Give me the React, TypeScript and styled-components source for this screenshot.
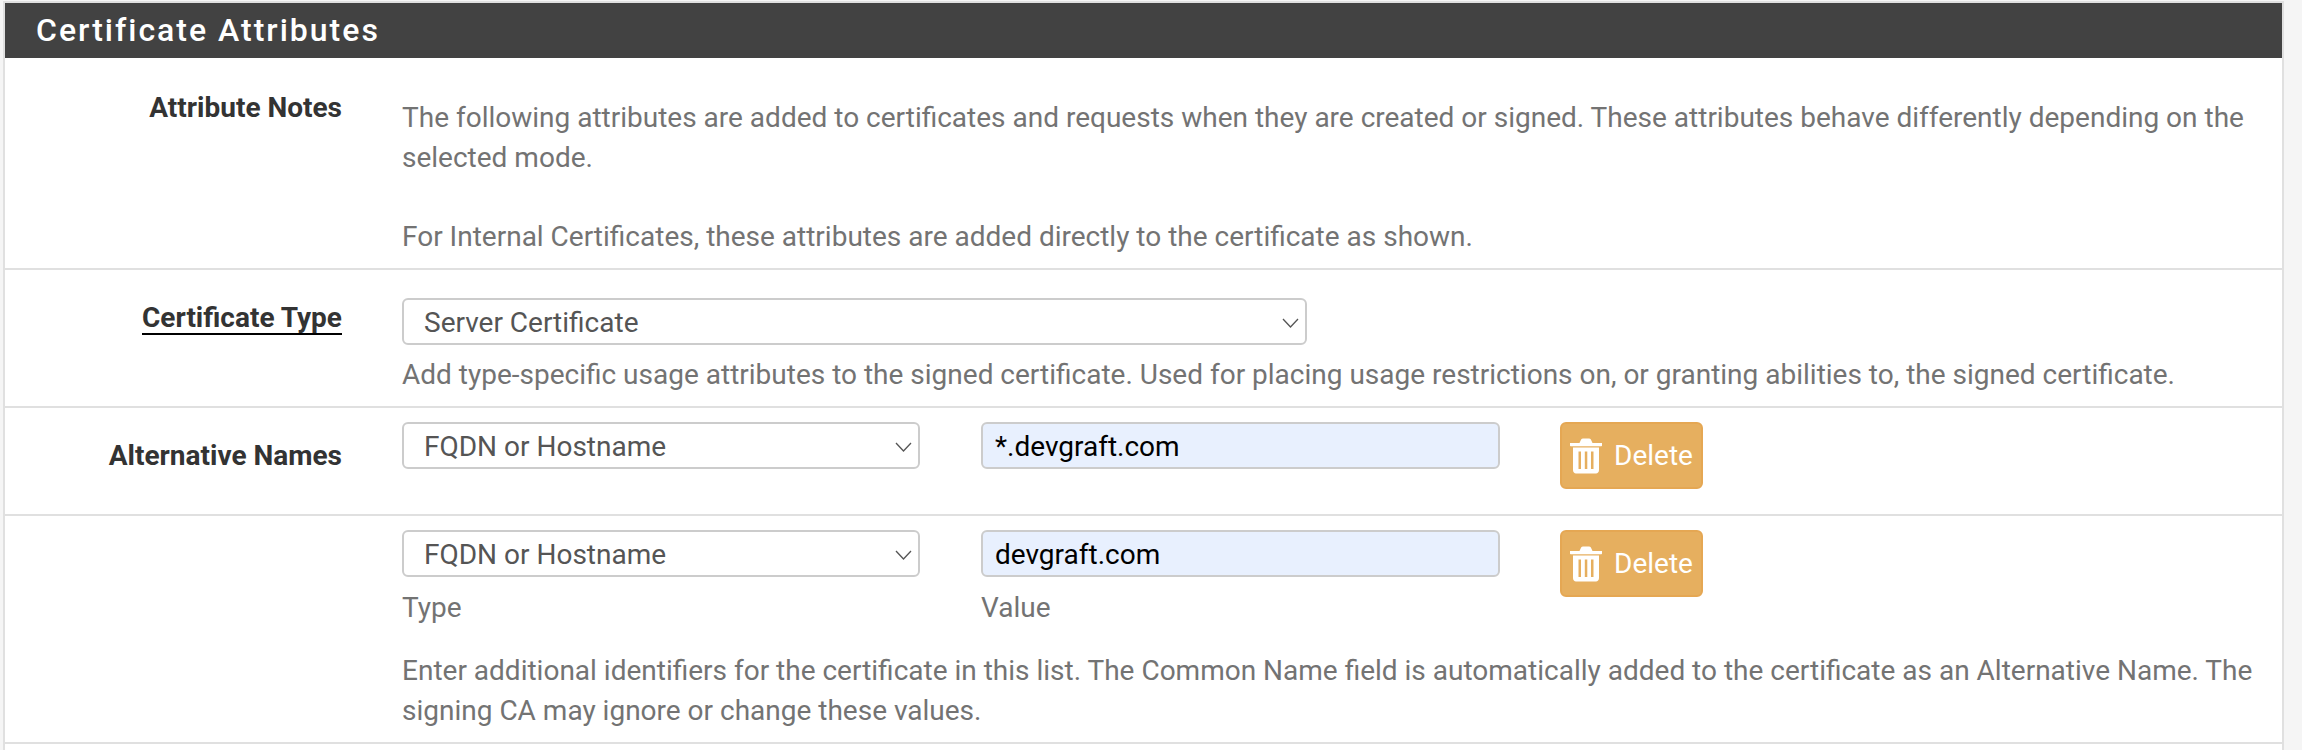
import React from "react";
import styled, { createGlobalStyle } from "styled-components";

const GlobalStyle = createGlobalStyle`
  html, body {
    margin: 0;
    padding: 0;
    background: #f5f5f5;
    font-family: Roboto, "Liberation Sans", sans-serif;
    font-size: 28px;
    color: #737373;
  }
  * { box-sizing: border-box; }
`;

const Page = styled.div`
  height: 750px;
  overflow: hidden;
  padding: 1px 18px 0 3px;
`;

const Panel = styled.section`
  height: 760px;
  background: #fff;
  border: 2px solid #e0e0e0;
`;

const PanelHeading = styled.h2`
  margin: 0;
  height: 55px;
  padding-left: 31px;
  background: #424242;
  color: #fff;
  font-size: 32px;
  font-weight: 500;
  line-height: 55px;
  letter-spacing: 2px;
`;

const Row = styled.div<{ $height: number; $border?: boolean }>`
  display: flex;
  height: ${(p) => p.$height}px;
  border-bottom: ${(p) => (p.$border === false ? "0" : "2px solid #e0e0e0")};
`;

const LabelCol = styled.div<{ $top: number }>`
  flex: 0 0 337px;
  padding-top: ${(p) => p.$top}px;
  text-align: right;
  font-weight: 700;
  color: #333;
  line-height: 30px;
`;

const Required = styled.span`
  border-bottom: 2px solid #000;
  display: inline-block;
  line-height: 30px;
`;

const ValueCol = styled.div<{ $top: number }>`
  flex: 1;
  margin-left: 60px;
  padding-top: ${(p) => p.$top}px;
  padding-right: 20px;
  min-width: 0;
`;

const Note = styled.p<{ $gap?: number }>`
  margin: ${(p) => p.$gap ?? 0}px 0 0;
  line-height: 39.5px;
`;

const SelectWrap = styled.div<{ $width: number }>`
  position: relative;
  width: ${(p) => p.$width}px;
`;

const Select = styled.select`
  display: block;
  width: 100%;
  height: 47px;
  padding: 1px 21px 0 20px;
  appearance: none;
  background: #fff;
  border: 2px solid #ccc;
  border-radius: 6px;
  color: #555;
  font: 400 28px Roboto, sans-serif;
`;

const Chevron = styled.svg`
  position: absolute;
  top: 20px;
  right: 8px;
  width: 17px;
  height: 10px;
  pointer-events: none;
`;

const Fields = styled.div`
  display: flex;
`;

const Field = styled.div`
  flex: 0 0 579px;
`;

const ValueInput = styled.input`
  display: block;
  width: 519px;
  height: 47px;
  padding: 1px 12px 0;
  background: #e8f0fe;
  border: 2px solid #ccc;
  border-radius: 6px;
  color: #000;
  font: 400 28px Roboto, sans-serif;
`;

const Caption = styled.div`
  margin-top: 11px;
  line-height: 40px;
`;

const DeleteButton = styled.button`
  display: flex;
  align-items: center;
  gap: 12px;
  width: 143px;
  height: 67px;
  padding: 0 0 0 8px;
  background: #e6af5f;
  border: 2px solid #e5a753;
  border-radius: 6px;
  color: #fff;
  font: 400 28px Roboto, sans-serif;
`;

const ChevronIcon = () => (
  <Chevron viewBox="0 0 17 10">
    <path d="M1 1l7.500 8L16 1" fill="none" stroke="#555" strokeWidth="1.300" />
  </Chevron>
);

const TrashIcon = () => (
  <svg width="32" height="36" viewBox="0 0 32 36">
    <path
      fill="#fff"
      fillRule="evenodd"
      d="M0 5h9.500l1.600-3.400C11.500.8 12.200.4 13 .4h6c.8 0 1.500.4 1.900 1.200L22.500 5H32v2.500c0 .4-.3.7-.7.7H.7c-.4 0-.7-.3-.7-.7zM3 9.500h26V32c0 2-1.400 3.600-3 3.600H6c-1.600 0-3-1.600-3-3.600zM8.500 13.500v17.500h2.500V13.500zM14.800 13.500v17.500h2.500V13.500zM21 13.500v17.500h2.500V13.500z"
    />
  </svg>
);

const NameRow = ({ value, caption }: { value: string; caption?: boolean }) => (
  <Fields>
    <Field>
      <SelectWrap $width={518}>
        <Select defaultValue="fqdn">
          <option value="fqdn">FQDN or Hostname</option>
        </Select>
        <ChevronIcon />
      </SelectWrap>
      {caption && <Caption>Type</Caption>}
    </Field>
    <Field>
      <ValueInput defaultValue={value} />
      {caption && <Caption>Value</Caption>}
    </Field>
    <DeleteButton>
      <TrashIcon />
      Delete
    </DeleteButton>
  </Fields>
);

export default function App() {
  return (
    <Page>
      <GlobalStyle />
      <Panel>
        <PanelHeading>Certificate Attributes</PanelHeading>
        <Row $height={212}>
          <LabelCol $top={35}>Attribute Notes</LabelCol>
          <ValueCol $top={40}>
            <Note>
              The following attributes are added to certificates and requests when they are
              created or signed. These attributes behave differently depending on the selected
              mode.
            </Note>
            <Note $gap={40}>
              For Internal Certificates, these attributes are added directly to the certificate
              as shown.
            </Note>
          </ValueCol>
        </Row>
        <Row $height={138}>
          <LabelCol $top={33}>
            <Required>Certificate Type</Required>
          </LabelCol>
          <ValueCol $top={28}>
            <SelectWrap $width={905}>
              <Select defaultValue="server">
                <option value="server">Server Certificate</option>
              </Select>
              <ChevronIcon />
            </SelectWrap>
            <Note $gap={10}>
              Add type-specific usage attributes to the signed certificate. Used for placing
              usage restrictions on, or granting abilities to, the signed certificate.
            </Note>
          </ValueCol>
        </Row>
        <Row $height={108}>
          <LabelCol $top={33}>Alternative Names</LabelCol>
          <ValueCol $top={14}>
            <NameRow value="*.devgraft.com" />
          </ValueCol>
        </Row>
        <Row $height={228}>
          <LabelCol $top={0} />
          <ValueCol $top={14}>
            <NameRow value="devgraft.com" caption />
            <Note $gap={23}>
              Enter additional identifiers for the certificate in this list. The Common Name
              field is automatically added to the certificate as an Alternative Name. The signing
              CA may ignore or change these values.
            </Note>
          </ValueCol>
        </Row>
      </Panel>
    </Page>
  );
}
